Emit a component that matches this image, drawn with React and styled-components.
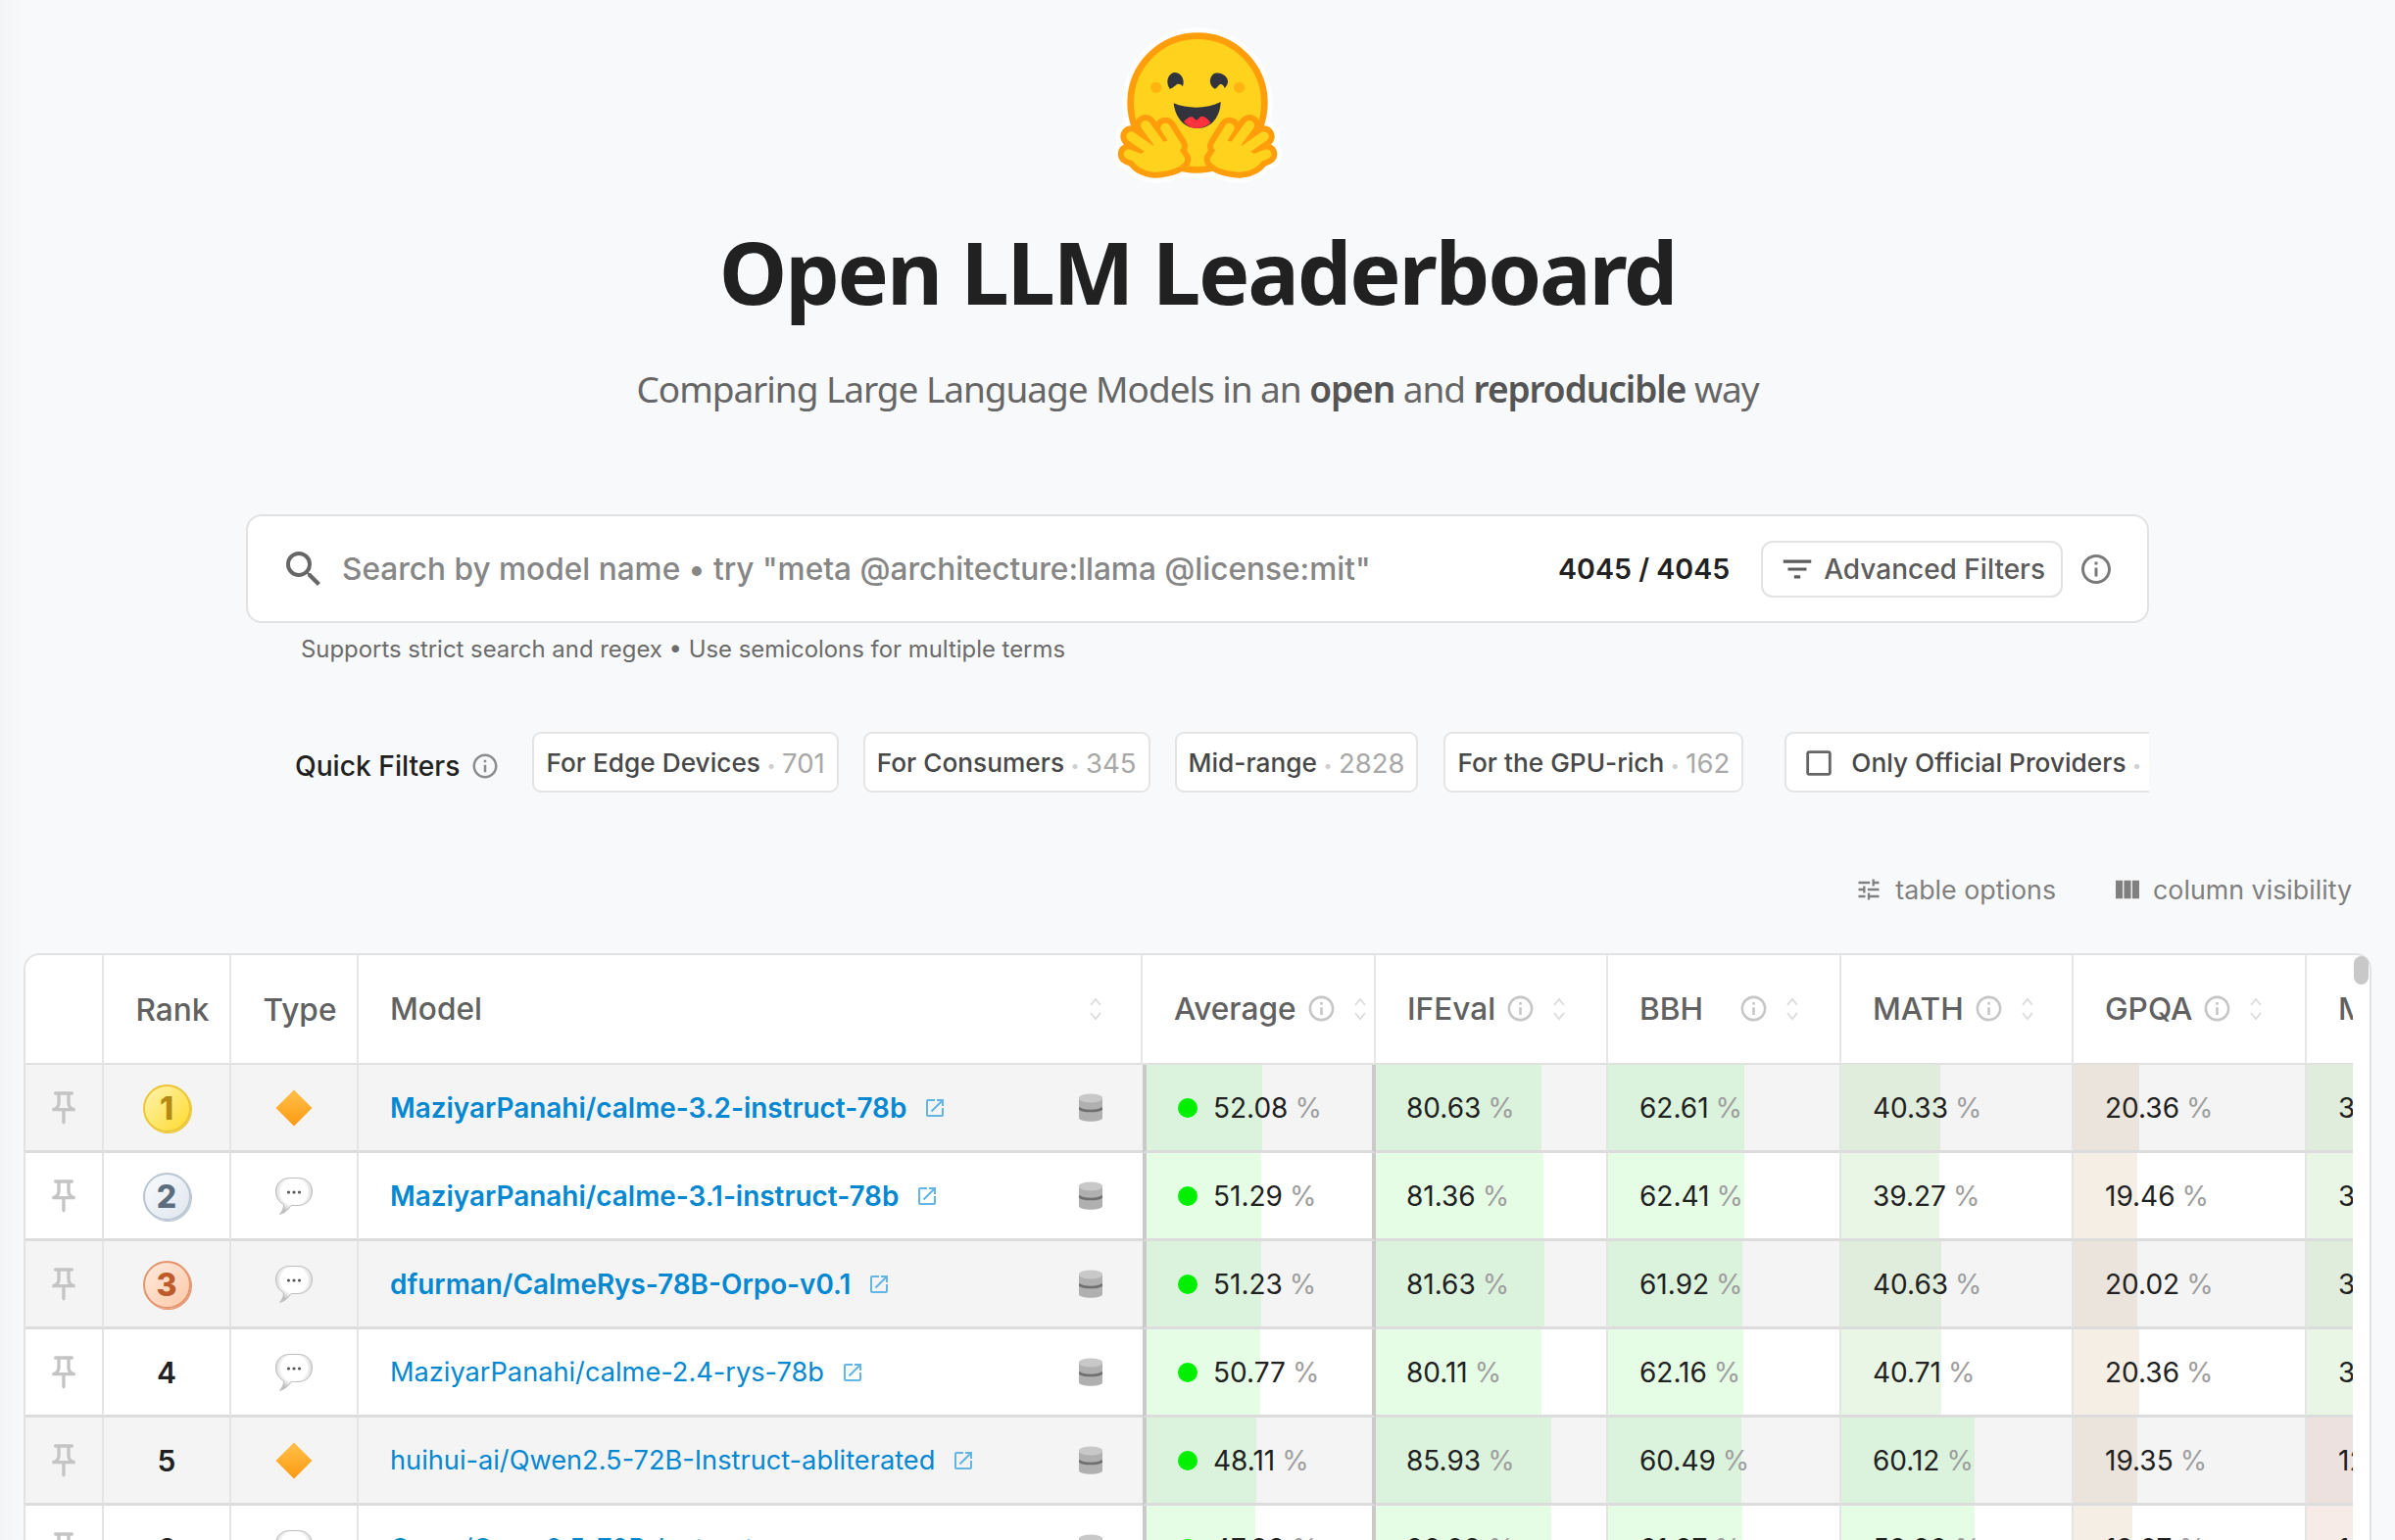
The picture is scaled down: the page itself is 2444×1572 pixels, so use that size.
import React from 'react';
import styled, { createGlobalStyle } from 'styled-components';
import {
	MdCheckBoxOutlineBlank,
	MdFilterList,
	MdInfoOutline,
	MdOpenInNew,
	MdOutlinePushPin,
	MdSearch,
	MdTune,
	MdViewColumn,
} from 'react-icons/md';

const GlobalStyle = createGlobalStyle`
	html, body {
		margin: 0;
		height: 100%;
		overflow: hidden;
	}

	body {
		background: linear-gradient(90deg, #f3f5f7 0, #f8f9fa 26px);
		font-family: Inter, 'Liberation Sans', sans-serif;
		color: #212121;
	}
`;

const Page = styled.div`
	display: flex;
	flex-direction: column;
	align-items: center;
`;

const LogoSvg = styled.svg`
	display: block;
	width: 300px;
	height: 200px;
`;

const Title = styled.h1`
	margin: 27px 0 0;
	font-family: 'Noto Sans', sans-serif;
	font-size: 88px;
	line-height: 100px;
	font-weight: 700;
	letter-spacing: -2.2px;
	color: #212121;
`;

const Subtitle = styled.p`
	margin: 45px 0 0;
	font-family: 'Noto Sans', sans-serif;
	font-size: 37px;
	line-height: 50px;
	letter-spacing: -1.05px;
	color: #666;

	strong {
		font-weight: 600;
		color: #555;
	}
`;

const SearchBar = styled.div`
	box-sizing: border-box;
	display: flex;
	align-items: center;
	width: 1942px;
	height: 111px;
	margin-top: 103px;
	padding: 0 34px 0 33px;
	background: #fff;
	border: 2px solid #e2e2e2;
	border-radius: 16px;
	color: #666;
`;

const Placeholder = styled.span`
	flex: 1;
	margin-left: 15px;
	font-size: 31.6px;
	font-weight: 500;
	color: #868686;
`;

const Count = styled.span`
	font-size: 28.6px;
	font-weight: 600;
	color: #212121;
`;

const FilterButton = styled.div`
	box-sizing: border-box;
	display: flex;
	align-items: center;
	gap: 8px;
	height: 58px;
	margin: 0 16px 0 32px;
	padding: 0 16px;
	background: #fff;
	border: 2px solid #e2e2e2;
	border-radius: 12px;
	font-size: 28px;
	font-weight: 500;
	color: #5c5c5c;
`;

const Hint = styled.div`
	width: 1942px;
	margin-top: 12px;
	padding-left: 56px;
	box-sizing: border-box;
	font-size: 23.9px;
	line-height: 30px;
	color: #6b6b6b;
`;

const FilterRow = styled.div`
	box-sizing: border-box;
	display: flex;
	align-items: center;
	width: 1942px;
	height: 62px;
	margin-top: 69px;
	padding-left: 50px;
	overflow: hidden;
`;

const FilterLabel = styled.div`
	display: flex;
	align-items: center;
	gap: 11px;
	margin-top: 7px;
	margin-right: 33px;
	flex: none;
	font-size: 28.2px;
	font-weight: 500;
	color: #212121;
`;

const Chip = styled.div`
	box-sizing: border-box;
	flex: none;
	display: flex;
	align-items: center;
	height: 62px;
	margin-right: ${(p) => p.$gap}px;
	padding: 1px 12px 0 ${(p) => (p.$check ? 16 : 12)}px;
	background: #fff;
	border: 2px solid #e4e4e4;
	border-radius: 9px;
	font-size: 26.25px;
	font-weight: 500;
	color: #484848;
	white-space: nowrap;
`;

const ChipCheck = styled(MdCheckBoxOutlineBlank)`
	margin-right: 16px;
	color: #666;
`;

const ChipCount = styled.span`
	font-size: 27.5px;
	font-weight: 400;
	color: #a8a8a8;

	&::before {
		content: '•';
		margin: 0 6.5px;
		font-size: 16px;
		vertical-align: 2px;
		color: #cfcfcf;
	}
`;

const ToolRow = styled.div`
	box-sizing: border-box;
	align-self: stretch;
	display: flex;
	justify-content: flex-end;
	gap: 57px;
	margin-top: 81px;
	padding-right: 44px;
	height: 36px;
`;

const Tool = styled.div`
	display: flex;
	align-items: center;
	gap: ${(p) => p.$gap}px;
	font-size: 26.8px;
	color: #808080;
`;

const TableBox = styled.div`
	box-sizing: border-box;
	align-self: flex-start;
	position: relative;
	width: 2396px;
	margin: 47px 0 0 24px;
	background: #fff;
	border: 2px solid #e2e2e2;
	border-bottom: none;
	border-radius: 16px 16px 0 0;
`;

const TableClip = styled.div`
	width: 2375px;
	height: 620px;
	overflow: hidden;
	border-top-left-radius: 14px;
`;

const ScrollThumb = styled.div`
	position: absolute;
	top: 1px;
	right: 1px;
	width: 15px;
	height: 29px;
	background: #c8c8c8;
	border-radius: 8px;
`;

const Table = styled.table`
	table-layout: fixed;
	width: 2582px;
	border-collapse: separate;
	border-spacing: 0;
`;

const HeadCell = styled.th`
	box-sizing: border-box;
	height: 112px;
	padding: 0 0 0 ${(p) => p.$pad ?? 0}px;
	border-right: 2px solid #e6e6e6;
	border-bottom: 2px solid #e0e0e0;
	font-size: 31.6px;
	font-weight: 500;
	color: #616161;
	text-align: ${(p) => p.$align ?? 'left'};
`;

const HeadInner = styled.div`
	display: flex;
	align-items: center;
	margin-top: -1px;
`;

const HeadLabel = styled.span`
	min-width: ${(p) => p.$min}px;
`;

const HeadInfo = styled(MdInfoOutline)`
	margin-left: 10px;
	color: #c6c6c6;
	flex: none;
`;

const SortSvg = styled.svg`
	display: block;
	width: 12px;
	height: 24px;
	margin-left: ${(p) => p.$left}px;
	fill: none;
	stroke: #dcdcdc;
	stroke-width: 1.8;
	flex: none;
`;

const Row = styled.tr`
	background: ${(p) => (p.$odd ? '#f4f4f5' : '#fff')};
`;

const Cell = styled.td`
	box-sizing: border-box;
	position: relative;
	height: 90px;
	padding: 0;
	border-bottom: 3px solid #dcdcdc;
	border-right: ${(p) => (p.$right === 'none' ? 'none' : p.$right === 'strong' ? '4px solid #cacaca' : '2px solid #e4e4e4')};
	border-left: ${(p) => (p.$strong ? '4px solid #cacaca' : 'none')};
	text-align: ${(p) => p.$align ?? 'left'};
`;

const PinIcon = styled(MdOutlinePushPin)`
	display: block;
	margin: 0 auto;
	color: #c4c4c4;
`;

const Medal = styled.div`
	box-sizing: border-box;
	display: inline-flex;
	align-items: center;
	justify-content: center;
	width: 49px;
	height: 49px;
	margin-top: 2px;
	border-radius: 50%;
	font-size: 32px;
	font-weight: 800;
	color: ${(p) => p.$tone.text};
	background: ${(p) => p.$tone.fill};
	border: 2px solid ${(p) => p.$tone.edge};
	box-shadow: 1px 1px 0 ${(p) => p.$tone.edge};
`;

const PlainRank = styled.span`
	font-size: 30px;
	font-weight: 600;
	color: #212121;
`;

const ModelBox = styled.div`
	display: flex;
	align-items: center;
	padding: 0 41px 0 32px;
`;

const ModelLink = styled.a`
	font-size: ${(p) => (p.$top ? 27.9 : 27.2)}px;
	font-weight: ${(p) => (p.$top ? 600 : 400)};
	color: #0288d1;
	text-decoration: none;
	white-space: nowrap;
`;

const OpenIcon = styled(MdOpenInNew)`
	flex: none;
	margin-left: 17px;
	color: #62b5e5;
`;

const DbSvg = styled.svg`
	display: block;
	flex: none;
	width: 24px;
	height: 30px;
	margin-left: auto;
`;

const ScoreBar = styled.div`
	position: absolute;
	top: 0;
	bottom: 0;
	left: 0;
	background: ${(p) => p.$color};
`;

const ScoreText = styled.div`
	position: relative;
	display: flex;
	align-items: center;
	padding-left: ${(p) => p.$pad}px;
	font-size: 28px;
	white-space: nowrap;
	color: #212121;
`;

const Dot = styled.span`
	width: 20px;
	height: 20px;
	margin-right: 16px;
	border-radius: 50%;
	background: #00f000;
`;

const Percent = styled.span`
	margin-left: 7px;
	color: #9e9e9e;
`;

const GREEN = 'rgba(0, 240, 0, 0.1)';
const LIME = 'rgba(50, 170, 0, 0.1)';
const TAN = 'rgba(155, 85, 0, 0.1)';
const RED = 'rgba(175, 55, 25, 0.1)';

const MEDALS = {
	1: { text: '#b58a12', edge: '#ecc534', fill: 'linear-gradient(135deg, #fff3b0, #ffdb2c)' },
	2: { text: '#5d6d7e', edge: '#b9c5d1', fill: 'linear-gradient(135deg, #f9fbfd, #dfe6ee)' },
	3: { text: '#bd5b2b', edge: '#e5936c', fill: 'linear-gradient(135deg, #ffeadd, #fdc9a8)' },
};

const HEADERS = [
	{ label: 'Average', min: 122 },
	{ label: 'IFEval', min: 88 },
	{ label: 'BBH', min: 91 },
	{ label: 'MATH', min: 88 },
	{ label: 'GPQA', min: 88 },
	{ label: 'MUSR', min: 88 },
];

const ROWS = [
	{
		rank: 1,
		kind: 'diamond',
		name: 'MaziyarPanahi/calme-3.2-instruct-78b',
		top: true,
		scores: [
			['52.08', 118, GREEN],
			['80.63', 169, GREEN],
			['62.61', 139, GREEN],
			['40.33', 101, LIME],
			['20.36', 67, TAN],
			['38.17', 237, LIME],
		],
	},
	{
		rank: 2,
		kind: 'bubble',
		name: 'MaziyarPanahi/calme-3.1-instruct-78b',
		top: true,
		scores: [
			['51.29', 117, GREEN],
			['81.36', 171, GREEN],
			['62.41', 139, GREEN],
			['39.27', 100, LIME],
			['19.46', 65, TAN],
			['38.53', 237, LIME],
		],
	},
	{
		rank: 3,
		kind: 'bubble',
		name: 'dfurman/CalmeRys-78B-Orpo-v0.1',
		top: true,
		scores: [
			['51.23', 117, GREEN],
			['81.63', 172, GREEN],
			['61.92', 137, GREEN],
			['40.63', 102, LIME],
			['20.02', 65, TAN],
			['38.30', 237, LIME],
		],
	},
	{
		rank: 4,
		kind: 'bubble',
		name: 'MaziyarPanahi/calme-2.4-rys-78b',
		scores: [
			['50.77', 116, GREEN],
			['80.11', 169, GREEN],
			['62.16', 138, GREEN],
			['40.71', 102, LIME],
			['20.36', 67, TAN],
			['38.29', 237, LIME],
		],
	},
	{
		rank: 5,
		kind: 'diamond',
		name: 'huihui-ai/Qwen2.5-72B-Instruct-abliterated',
		scores: [
			['48.11', 112, GREEN],
			['85.93', 179, GREEN],
			['60.49', 136, GREEN],
			['60.12', 136, GREEN],
			['19.35', 65, TAN],
			['12.03', 237, RED],
		],
	},
	{
		rank: 6,
		kind: 'bubble',
		name: 'Qwen/Qwen2.5-72B-Instruct',
		scores: [
			['47.98', 111, GREEN],
			['86.09', 179, GREEN],
			['61.87', 137, GREEN],
			['59.80', 136, GREEN],
			['19.07', 60, TAN],
			['13.52', 237, RED],
		],
	},
];

function HandParts({ stroke, extra }) {
	const width = 30 + extra;
	return (
		<g fill={stroke} stroke={stroke} strokeLinecap="round" strokeLinejoin="round" strokeWidth={width}>
			<path d="M327 392 L362 448" fill="none" />
			<path d="M266 384 L316 452" fill="none" />
			<path d="M222 418 L292 466" fill="none" />
			<path d="M214 472 L280 498" fill="none" />
			<path
				d="M295 448 L345 432 L382 486 C382 505 340 520 295 522 C262 520 240 505 232 490 Z"
				strokeWidth={10 + extra}
			/>
		</g>
	);
}

function Logo() {
	const hands = (stroke, extra) => (
		<>
			<HandParts stroke={stroke} extra={extra} />
			<g transform="translate(850 0) scale(-1 1)">
				<HandParts stroke={stroke} extra={extra} />
			</g>
		</>
	);
	return (
		<LogoSvg viewBox="-25 0 900 600">
			<circle cx="425" cy="315" r="230" fill="#fff" />
			{hands('#fff', 66)}
			<circle cx="425" cy="315" r="205" fill="#ffd21e" stroke="#ff9d0b" strokeWidth="20" />
			<circle cx="298" cy="268" r="17" fill="#ffb40f" />
			<circle cx="553" cy="268" r="17" fill="#ffb40f" />
			<path
				d="M340 272 C322 240 345 222 355 222 C372 222 388 240 380 265 C372 255 362 256 358 262 C352 266 346 272 340 272 Z"
				fill="#32343d"
			/>
			<path
				d="M478 272 C460 262 460 240 472 228 C490 216 520 232 518 252 C516 262 510 268 508 270 C504 256 494 255 490 262 C486 266 482 272 478 272 Z"
				fill="#32343d"
			/>
			<path
				d="M352 316 C395 334 455 334 496 312 C495 355 470 393 424 393 C380 393 356 355 352 316 Z"
				fill="#32343d"
			/>
			<path
				d="M383 372 C394 360 408 352 414 362 C420 370 426 368 431 360 C440 350 456 362 465 376 C452 388 438 393 424 393 C408 393 393 386 383 372 Z"
				fill="#ff323d"
			/>
			{hands('#ff9d0b', 36)}
			{hands('#ffd21e', 0)}
		</LogoSvg>
	);
}

function SortIcon({ left }) {
	return (
		<SortSvg viewBox="0 0 12 24" $left={left}>
			<path d="M1 8 L6 2 L11 8 M1 16 L6 22 L11 16" />
		</SortSvg>
	);
}

function DiamondIcon() {
	return (
		<svg width="38" height="38" viewBox="0 0 38 38" style={{ display: 'block', margin: '0 auto' }}>
			<defs>
				<linearGradient id="diamondFill" x1="0" y1="0" x2="0" y2="1">
					<stop offset="0" stopColor="#ffc04a" />
					<stop offset="1" stopColor="#ff9a12" />
				</linearGradient>
			</defs>
			<path d="M19 0.5 L37.5 19 L19 37.5 L0.5 19 Z" fill="url(#diamondFill)" />
		</svg>
	);
}

function BubbleIcon() {
	return (
		<svg width="38" height="38" viewBox="0 0 38 38" style={{ display: 'block', margin: '0 auto' }}>
			<defs>
				<radialGradient id="bubbleFill" cx="0.5" cy="0.38" r="0.58">
					<stop offset="0.62" stopColor="#ffffff" />
					<stop offset="1" stopColor="#bdbdbd" />
				</radialGradient>
			</defs>
			<path
				d="M15 0.5 H23 C32 0.5 37.5 6 37.5 14 C37.5 23 31 28.5 23 28.5 H16 C14 32 10 36 4.5 37.5 C7.5 34 8.5 31 8.5 27.5 C3.5 25 0.5 20.5 0.5 14 C0.5 6 6 0.5 15 0.5 Z"
				fill="url(#bubbleFill)"
				stroke="#bfbfbf"
			/>
			<circle cx="13.5" cy="15" r="1.6" fill="#555" />
			<circle cx="19" cy="15" r="1.6" fill="#555" />
			<circle cx="24.5" cy="15" r="1.6" fill="#555" />
		</svg>
	);
}

function DbIcon() {
	return (
		<DbSvg viewBox="0 0 24 30">
			<path d="M0 5 C0 0 24 0 24 5 V25 C24 30 0 30 0 25 Z" fill="#b0b0b0" />
			<ellipse cx="12" cy="5" rx="12" ry="4.5" fill="#c8c8c8" />
			<path d="M0 15 C4 19 20 19 24 15" fill="none" stroke="#6f6f6f" strokeWidth="2.5" />
		</DbSvg>
	);
}

function RankMark({ rank }) {
	if (MEDALS[rank]) {
		return <Medal $tone={MEDALS[rank]}>{rank}</Medal>;
	}
	return <PlainRank>{rank}</PlainRank>;
}

function ScoreCell({ score, index }) {
	const [value, width, color] = score;
	return (
		<Cell $strong={index === 0} $right={index === 0 ? 'strong' : undefined}>
			<ScoreBar $color={color} style={{ width }} />
			<ScoreText $pad={index === 0 ? 32 : index === 1 ? 31 : 32}>
				{index === 0 && <Dot />}
				{value}
				<Percent>%</Percent>
			</ScoreText>
		</Cell>
	);
}

export default function App() {
	return (
		<Page>
			<GlobalStyle />
			<Logo />
			<Title>Open LLM Leaderboard</Title>
			<Subtitle>
				Comparing Large Language Models in an <strong>open</strong> and <strong>reproducible</strong> way
			</Subtitle>

			<SearchBar>
				<MdSearch size={48} />
				<Placeholder>Search by model name • try "meta @architecture:llama @license:mit"</Placeholder>
				<Count>4045 / 4045</Count>
				<FilterButton>
					<MdFilterList size={38} />
					Advanced Filters
				</FilterButton>
				<MdInfoOutline size={36} color="#7a7a7a" />
			</SearchBar>
			<Hint>Supports strict search and regex • Use semicolons for multiple terms</Hint>

			<FilterRow>
				<FilterLabel>
					Quick Filters
					<MdInfoOutline size={30} color="#8c8c8c" />
				</FilterLabel>
				<Chip $gap={25}>
					For Edge Devices<ChipCount>701</ChipCount>
				</Chip>
				<Chip $gap={25}>
					For Consumers<ChipCount>345</ChipCount>
				</Chip>
				<Chip $gap={26}>
					Mid-range<ChipCount>2828</ChipCount>
				</Chip>
				<Chip $gap={42}>
					For the GPU-rich<ChipCount>162</ChipCount>
				</Chip>
				<Chip $gap={0} $check>
					<ChipCheck size={34} />
					Only Official Providers<ChipCount>459</ChipCount>
				</Chip>
			</FilterRow>

			<ToolRow>
				<Tool $gap={13}>
					<MdTune size={28} />
					table options
				</Tool>
				<Tool $gap={10}>
					<MdViewColumn size={32} />
					column visibility
				</Tool>
			</ToolRow>

			<TableBox>
				<TableClip>
					<Table>
						<colgroup>
							<col width="80" />
							<col width="130" />
							<col width="130" />
							<col width="800" />
							<col width="238" />
							<col width="237" />
							<col width="238" />
							<col width="237" />
							<col width="238" />
							<col width="254" />
						</colgroup>
						<thead>
							<tr>
								<HeadCell />
								<HeadCell $align="center" $pad={12}>
									Rank
								</HeadCell>
								<HeadCell $align="center" $pad={12}>
									Type
								</HeadCell>
								<HeadCell $pad={32}>
									<HeadInner>
										<HeadLabel $min={0}>Model</HeadLabel>
										<SortIcon left={620} />
									</HeadInner>
								</HeadCell>
								{HEADERS.map((head) => (
									<HeadCell key={head.label} $pad={32}>
										<HeadInner>
											<HeadLabel $min={head.min}>{head.label}</HeadLabel>
											<HeadInfo size={31} />
											<SortIcon left={18} />
										</HeadInner>
									</HeadCell>
								))}
							</tr>
						</thead>
						<tbody>
							{ROWS.map((row) => (
								<Row key={row.rank} $odd={row.rank % 2 === 1}>
									<Cell>
										<PinIcon size={40} />
									</Cell>
									<Cell $align="center">
										<RankMark rank={row.rank} />
									</Cell>
									<Cell>{row.kind === 'diamond' ? <DiamondIcon /> : <BubbleIcon />}</Cell>
									<Cell $right="none">
										<ModelBox>
											<ModelLink $top={row.top}>{row.name}</ModelLink>
											<OpenIcon size={24} />
											<DbIcon />
										</ModelBox>
									</Cell>
									{row.scores.map((score, index) => (
										<ScoreCell key={index} score={score} index={index} />
									))}
								</Row>
							))}
						</tbody>
					</Table>
				</TableClip>
				<ScrollThumb />
			</TableBox>
		</Page>
	);
}
